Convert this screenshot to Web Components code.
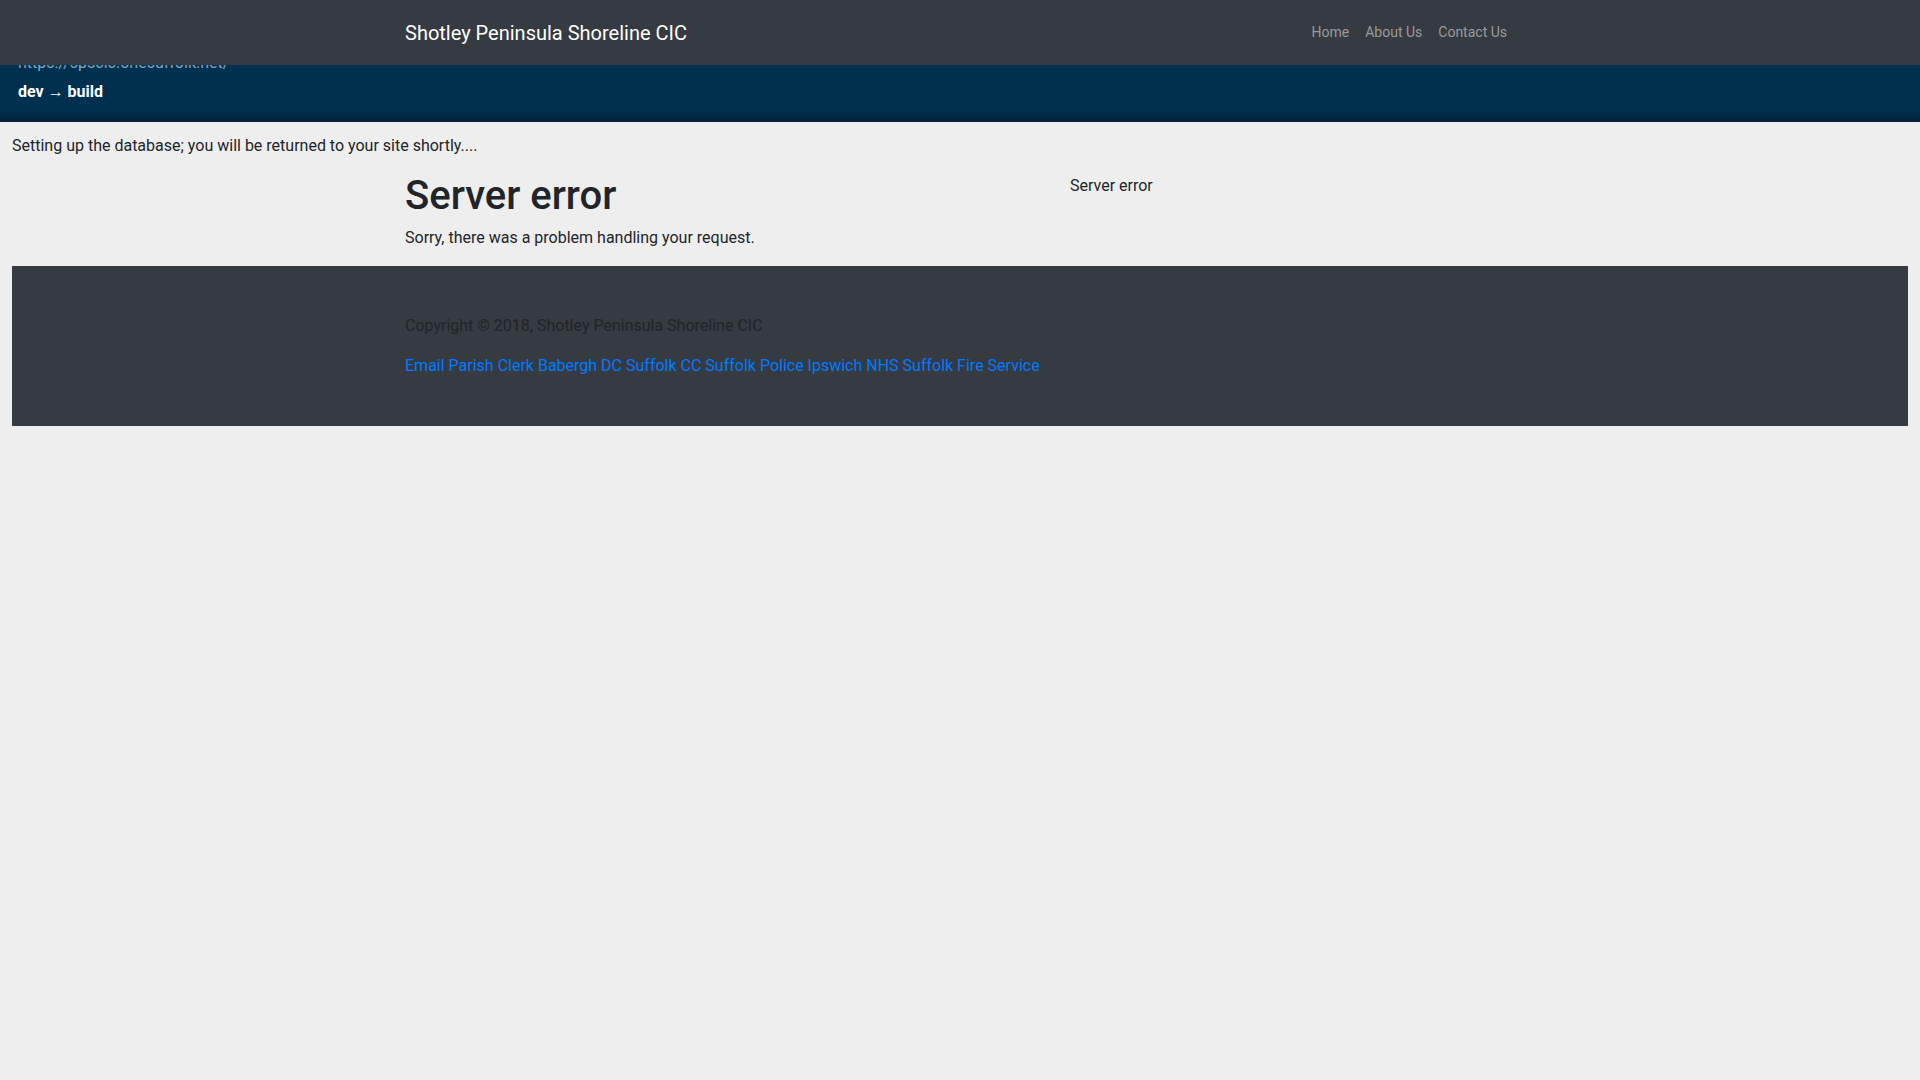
<!DOCTYPE html>
<html lang="en">
<head>
<meta charset="utf-8">
<meta name="viewport" content="width=device-width, initial-scale=1">
<title>Server error</title>
<style>
  body {
    margin: 0;
    background: #eee;
    color: #212529;
    font-family: Roboto, "Liberation Sans", sans-serif;
    font-size: 16px;
    line-height: 24px;
  }
  h1 {
    margin: 0 0 6px;
    font-size: 40px;
    font-weight: 500;
    line-height: 48px;
  }
  p {
    margin: 0;
  }
</style>
</head>
<body>
<site-navbar>
  <span slot="brand">Shotley Peninsula Shoreline CIC</span>
</site-navbar>
<build-info href="https://spscic.onesuffolk.net/">dev → build</build-info>
<page-body>
  <p slot="message">Setting up the database; you will be returned to your site shortly....</p>
  <h1>Server error</h1>
  <p>Sorry, there was a problem handling your request.</p>
  <p slot="aside">Server error</p>
</page-body>
<site-footer>Copyright © 2018, Shotley Peninsula Shoreline CIC</site-footer>

<script>
const containerStyles = `
  * {
    box-sizing: border-box;
  }
  .container {
    width: 100%;
    max-width: 1140px;
    margin-inline: auto;
    padding-inline: 15px;
  }
`;

class SiteNavbar extends HTMLElement {
  constructor() {
    super();
    this.shadowDOM = this.attachShadow({ mode: 'open' });
  }
  connectedCallback() {
    this.render();
  }

  render() {
    this.shadowDOM.innerHTML = `
    <style>
      ${containerStyles}
      :host {
        display: block;
        position: fixed;
        top: 0;
        left: 0;
        right: 0;
        z-index: 10;
        padding-block: 12px;
        background: #363a41;
      }
      .container {
        display: flex;
        flex-wrap: wrap;
        align-items: flex-start;
        justify-content: space-between;
      }
      a {
        text-decoration: none;
      }
      .brand {
        padding: 6px 0 5px;
        color: #fff;
        font-size: 20px;
        line-height: 30px;
      }
      ul {
        display: flex;
        margin: 0;
        padding: 0;
        list-style: none;
      }
      li a {
        display: block;
        padding: 8px;
        color: #9a9b9e;
        font-size: 14px;
      }
    </style>
    <nav class="container">
      <a class="brand" href="#home"><slot name="brand"></slot></a>
      <ul>
        <li><a href="#home">Home</a></li>
        <li><a href="#about">About Us</a></li>
        <li><a href="#contact">Contact Us</a></li>
      </ul>
    </nav>`;
  }
}

// Dark strip at the top of the page, partly covered by the fixed navbar
class BuildInfo extends HTMLElement {
  constructor() {
    super();
    this.shadowDOM = this.attachShadow({ mode: 'open' });
  }
  connectedCallback() {
    this.render();
  }

  render() {
    const href = this.getAttribute('href');
    this.shadowDOM.innerHTML = `
    <style>
      :host {
        display: block;
        padding: 51px 18px 18px;
        background: linear-gradient(to top, #002038, #003050 12px);
      }
      a {
        display: block;
        width: fit-content;
        margin-bottom: 5px;
        color: #79a8c6;
        text-decoration: none;
      }
      p {
        margin: 0;
        color: #fff;
        font-weight: 700;
      }
    </style>
    <a href="${href}">${href}</a>
    <p><slot></slot></p>`;
  }
}

class PageBody extends HTMLElement {
  constructor() {
    super();
    this.shadowDOM = this.attachShadow({ mode: 'open' });
  }
  connectedCallback() {
    this.render();
  }

  render() {
    this.shadowDOM.innerHTML = `
    <style>
      ${containerStyles}
      :host {
        display: block;
        padding: 12px 12px 0;
      }
      .row {
        display: grid;
        grid-template-columns: 7fr 5fr;
        margin-inline: -15px;
      }
      main, aside {
        padding: 0 15px 16px;
      }
      main {
        padding-top: 14px;
      }
      aside {
        padding-top: 16px;
      }
    </style>
    <slot name="message"></slot>
    <div class="container">
      <div class="row">
        <main><slot></slot></main>
        <aside><slot name="aside"></slot></aside>
      </div>
    </div>`;
  }
}

class SiteFooter extends HTMLElement {
  constructor() {
    super();
    this.shadowDOM = this.attachShadow({ mode: 'open' });
  }
  connectedCallback() {
    this.render();
  }

  render() {
    this.shadowDOM.innerHTML = `
    <style>
      ${containerStyles}
      :host {
        display: block;
        margin: 0 12px 12px;
        padding-block: 48px;
        background: #363a41;
      }
      p {
        margin: 0 0 16px;
      }
      a {
        color: #007bff;
        text-decoration: none;
      }
    </style>
    <footer class="container">
      <p><slot></slot></p>
      <div>
        <a href="#clerk">Email Parish Clerk</a>
        <a href="#babergh">Babergh DC</a>
        <a href="#suffolk">Suffolk CC</a>
        <a href="#police">Suffolk Police</a>
        <a href="#nhs">Ipswich NHS</a>
        <a href="#fire">Suffolk Fire Service</a>
      </div>
    </footer>`;
  }
}

customElements.define("site-navbar", SiteNavbar);
customElements.define("build-info", BuildInfo);
customElements.define("page-body", PageBody);
customElements.define("site-footer", SiteFooter);
</script>
</body>
</html>
